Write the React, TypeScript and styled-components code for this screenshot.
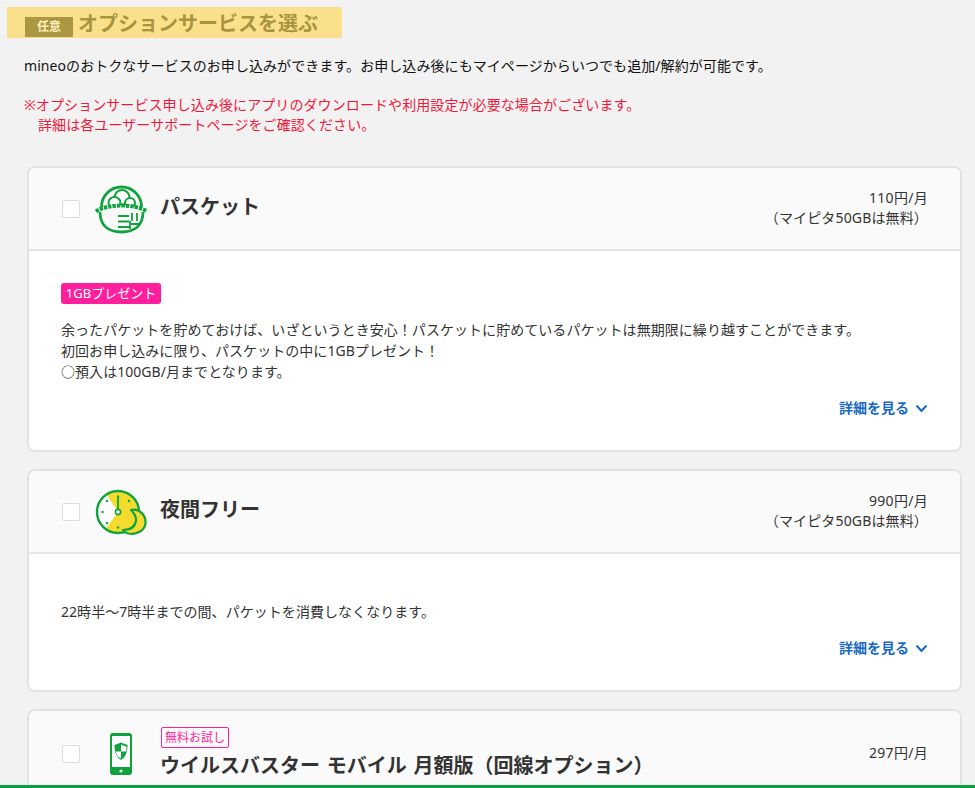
import React from "react";
import styled, { createGlobalStyle } from "styled-components";

const Global = createGlobalStyle`
  html, body { margin: 0; padding: 0; background: #f2f2f2; height: 788px; overflow: hidden; }
  body { font-family: "Noto Sans", "Noto Sans CJK JP", sans-serif; color: #333; }
`;
const Page = styled.div`
  padding: 7px 13px 0 7px;
  height: 781px;
  overflow: hidden;
`;
const Band = styled.div`
  display: flex;
  align-items: flex-end;
  width: 335px;
  height: 31px;
  box-sizing: border-box;
  background: #fbe08c;
  padding: 0 0 1px 18px;
`;
const Tag = styled.span`
  width: 48px;
  height: 20px;
  background: #ab9641;
  color: #fbeeb8;
  font-size: 12px;
  font-weight: 700;
  line-height: 20px;
  text-align: center;
`;
const Heading = styled.h2`
  margin: 0 0 0 5px;
  font-size: 20px;
  line-height: 26px;
  font-weight: 700;
  color: #a8933f;
  white-space: nowrap;
`;
const Intro = styled.p`
  margin: 17px 0 0 17px;
  font-size: 14px;
  line-height: 22px;
  letter-spacing: 0.07px;
  color: #111;
  white-space: nowrap;
`;
const Notice = styled.p`
  margin: 18px 0 0 17px;
  font-size: 14px;
  line-height: 20px;
  letter-spacing: 0.09px;
  color: #f0193c;
  white-space: nowrap;
`;
const Indent = styled.span`
  padding-left: 14px;
`;
const Cards = styled.div`
  display: flex;
  flex-direction: column;
  gap: 17px;
  margin: 31px 0 0 20px;
`;
const Card = styled.section<{ $h: number }>`
  box-sizing: border-box;
  width: 935px;
  height: ${(p) => p.$h}px;
  background: #fff;
  border: 2px solid #e2e2e2;
  border-radius: 8px;
  overflow: hidden;
  flex: none;
`;
const Head = styled.div<{ $h: number }>`
  display: flex;
  align-items: center;
  height: ${(p) => p.$h}px;
  box-sizing: border-box;
  padding: 0 32px 0 33px;
  background: #fafafa;
  border-bottom: 2px solid #e5e5e5;
`;
const Check = styled.span`
  flex: none;
  width: 18px;
  height: 18px;
  box-sizing: border-box;
  background: #fff;
  border: 1px solid #ddd;
  border-radius: 2px;
`;
const IconSlot = styled.span`
  flex: none;
  width: 52px;
  height: 52px;
  margin: 0 13px 0 15px;
  display: flex;
  align-items: center;
  justify-content: center;
`;
const TitleCol = styled.div`
  flex: 1;
  min-width: 0;
`;
const Title = styled.h3<{ $withTrial?: boolean }>`
  margin: ${(p) => (p.$withTrial ? "3px 0 0" : "0 0 4px")};
  font-size: 20px;
  line-height: 30px;
  font-weight: 700;
  word-spacing: 1.5px;
  color: #333;
  white-space: nowrap;
`;
const Trial = styled.span`
  display: block;
  width: 68px;
  margin-left: 1px;
  box-sizing: border-box;
  height: 21px;
  border: 1px solid #ff1f9c;
  border-radius: 2px;
  color: #ff1f9c;
  font-size: 12px;
  line-height: 19px;
  text-align: center;
`;
const Price = styled.div`
  margin-bottom: 2px;
  font-size: 14px;
  line-height: 20px;
  letter-spacing: 0.3px;
  text-align: right;
  color: #333;
  white-space: nowrap;
`;
const PriceNote = styled.div`
  letter-spacing: 0.15px;
`;
const Body = styled.div<{ $top: number }>`
  padding: ${(p) => p.$top}px 32px 0 32px;
`;
const Present = styled.span`
  display: block;
  width: 100px;
  height: 21px;
  background: #ff1f9c;
  border-radius: 3px;
  color: #fff;
  font-size: 13px;
  line-height: 21px;
  text-align: center;
`;
const Desc = styled.p<{ $top: number }>`
  margin: ${(p) => p.$top}px 0 0;
  font-size: 14px;
  line-height: 21px;
  letter-spacing: 0.05px;
  color: #333;
  white-space: nowrap;
`;
const MoreRow = styled.div`
  display: flex;
  justify-content: flex-end;
  margin-top: 16px;
`;
const More = styled.a`
  display: flex;
  align-items: center;
  gap: 6px;
  color: #1a6ac4;
  font-size: 14px;
  line-height: 20px;
  font-weight: 700;
`;
const Bottom = styled.div`
  position: fixed;
  left: 0;
  right: 0;
  bottom: 0;
  height: 3px;
  background: #0ca040;
`;

const G = "#0fa23e";
const Basket = () => (
  <svg width="52" height="52" viewBox="0 0 52 52" fill="none">
    <path d="M6.500 24A20 20 0 1 1 46.500 24" stroke={G} strokeWidth="2.800" />
    <circle cx="27" cy="14.500" r="7.500" fill="#fff" stroke={G} strokeWidth="2" />
    <circle cx="19.500" cy="20" r="6" fill="#fff" stroke={G} strokeWidth="2" />
    <circle cx="35" cy="20" r="5" fill="#fff" stroke={G} strokeWidth="2" />
    <path d="M1 28.500C12 20.500 41 20.500 52 28.500V33H1Z" fill="#fafafa" />
    <path d="M1 28.500C12 20.500 41 20.500 52 28.500" stroke={G} strokeWidth="4" strokeDasharray="3.400 1" />
    <path d="M5 29C5 43 14 49 26.500 49S48 43 48 29" stroke={G} strokeWidth="2.800" />
    <path d="M23 33h11M23 38.500h11M23 44h11M37 30v8M42 30v8M36 41h8M35 38v8" stroke={G} strokeWidth="1.800" />
  </svg>
);
const Clock = () => (
  <svg width="52" height="52" viewBox="0 0 52 52" fill="none">
    <circle cx="23" cy="26" r="21" fill="#f3dc2c" />
    <path d="M23 26L12 9A20.500 20.500 0 0 0 11 42.500Z" fill="#fff" />
    <circle cx="23" cy="26" r="21" stroke={G} strokeWidth="2.400" />
    <path d="M23 26V11" stroke={G} strokeWidth="1.800" />
    <circle cx="23" cy="26" r="2.600" fill="#fff" stroke={G} strokeWidth="1.600" />
    <g fill={G}>
      <circle cx="23" cy="10.500" r="1.200" /><circle cx="34" cy="15" r="1.200" /><circle cx="12" cy="15" r="1.200" />
      <circle cx="7.500" cy="26" r="1.200" /><circle cx="12" cy="37" r="1.200" /><circle cx="23" cy="41.500" r="1.200" />
    </g>
    <path d="M36 24C45 22 51 30 50.500 37 50 45 41 49 33 47.500 31 47 29 46 28 44 35 44 40 41 41 35 41.500 30 39 27 36 24Z" fill="#f3dc2c" stroke={G} strokeWidth="2.200" strokeLinejoin="round" />
  </svg>
);
const Phone = () => (
  <svg width="22" height="42" viewBox="0 0 22 42" fill="none">
    <rect width="22" height="42" rx="3" fill={G} />
    <rect x="2" y="3" width="18" height="31" fill="#fff" />
    <circle cx="11" cy="38" r="1.600" fill="#fff" />
    <path d="M11 9.500l6.500 2.500c0 7-1.800 12-6.500 15-4.700-3-6.500-8-6.500-15z" fill={G} />
    <path d="M11 11.500v7H5.800c.5 3 2 5.800 5.200 7v-7h5.200c.2-1.400.3-3 .3-4.700z" fill="#fff" />
  </svg>
);
const Chevron = () => (
  <svg width="13" height="9" viewBox="0 0 13 9" fill="none">
    <path d="M1.500 1.500L6.500 7l5-5.500" stroke="#1a6ac4" strokeWidth="2" />
  </svg>
);

const MoreLink = () => (
  <MoreRow>
    <More>詳細を見る<Chevron /></More>
  </MoreRow>
);

export default function App() {
  return (
    <Page>
      <Global />
      <Band>
        <Tag>任意</Tag>
        <Heading>オプションサービスを選ぶ</Heading>
      </Band>
      <Intro>mineoのおトクなサービスのお申し込みができます。お申し込み後にもマイページからいつでも追加/解約が可能です。</Intro>
      <Notice>
        ※オプションサービス申し込み後にアプリのダウンロードや利用設定が必要な場合がございます。<br />
        <Indent>詳細は各ユーザーサポートページをご確認ください。</Indent>
      </Notice>
      <Cards>
        <Card $h={286}>
          <Head $h={83}>
            <Check />
            <IconSlot><Basket /></IconSlot>
            <TitleCol><Title>パスケット</Title></TitleCol>
            <Price>110円/月<PriceNote>（マイピタ50GBは無料）</PriceNote></Price>
          </Head>
          <Body $top={32}>
            <Present>1GBプレゼント</Present>
            <Desc $top={15}>
              余ったパケットを貯めておけば、いざというとき安心！パスケットに貯めているパケットは無期限に繰り越すことができます。<br />
              初回お申し込みに限り、パスケットの中に1GBプレゼント！<br />
              ○預入は100GB/月までとなります。
            </Desc>
            <MoreLink />
          </Body>
        </Card>
        <Card $h={223}>
          <Head $h={83}>
            <Check />
            <IconSlot><Clock /></IconSlot>
            <TitleCol><Title>夜間フリー</Title></TitleCol>
            <Price>990円/月<PriceNote>（マイピタ50GBは無料）</PriceNote></Price>
          </Head>
          <Body $top={47}>
            <Desc $top={0}>22時半～7時半までの間、パケットを消費しなくなります。</Desc>
            <MoreLink />
          </Body>
        </Card>
        <Card $h={100}>
          <Head $h={87}>
            <Check />
            <IconSlot><Phone /></IconSlot>
            <TitleCol>
              <Trial>無料お試し</Trial>
              <Title $withTrial>ウイルスバスター モバイル 月額版（回線オプション）</Title>
            </TitleCol>
            <Price>297円/月</Price>
          </Head>
        </Card>
      </Cards>
      <Bottom />
    </Page>
  );
}
